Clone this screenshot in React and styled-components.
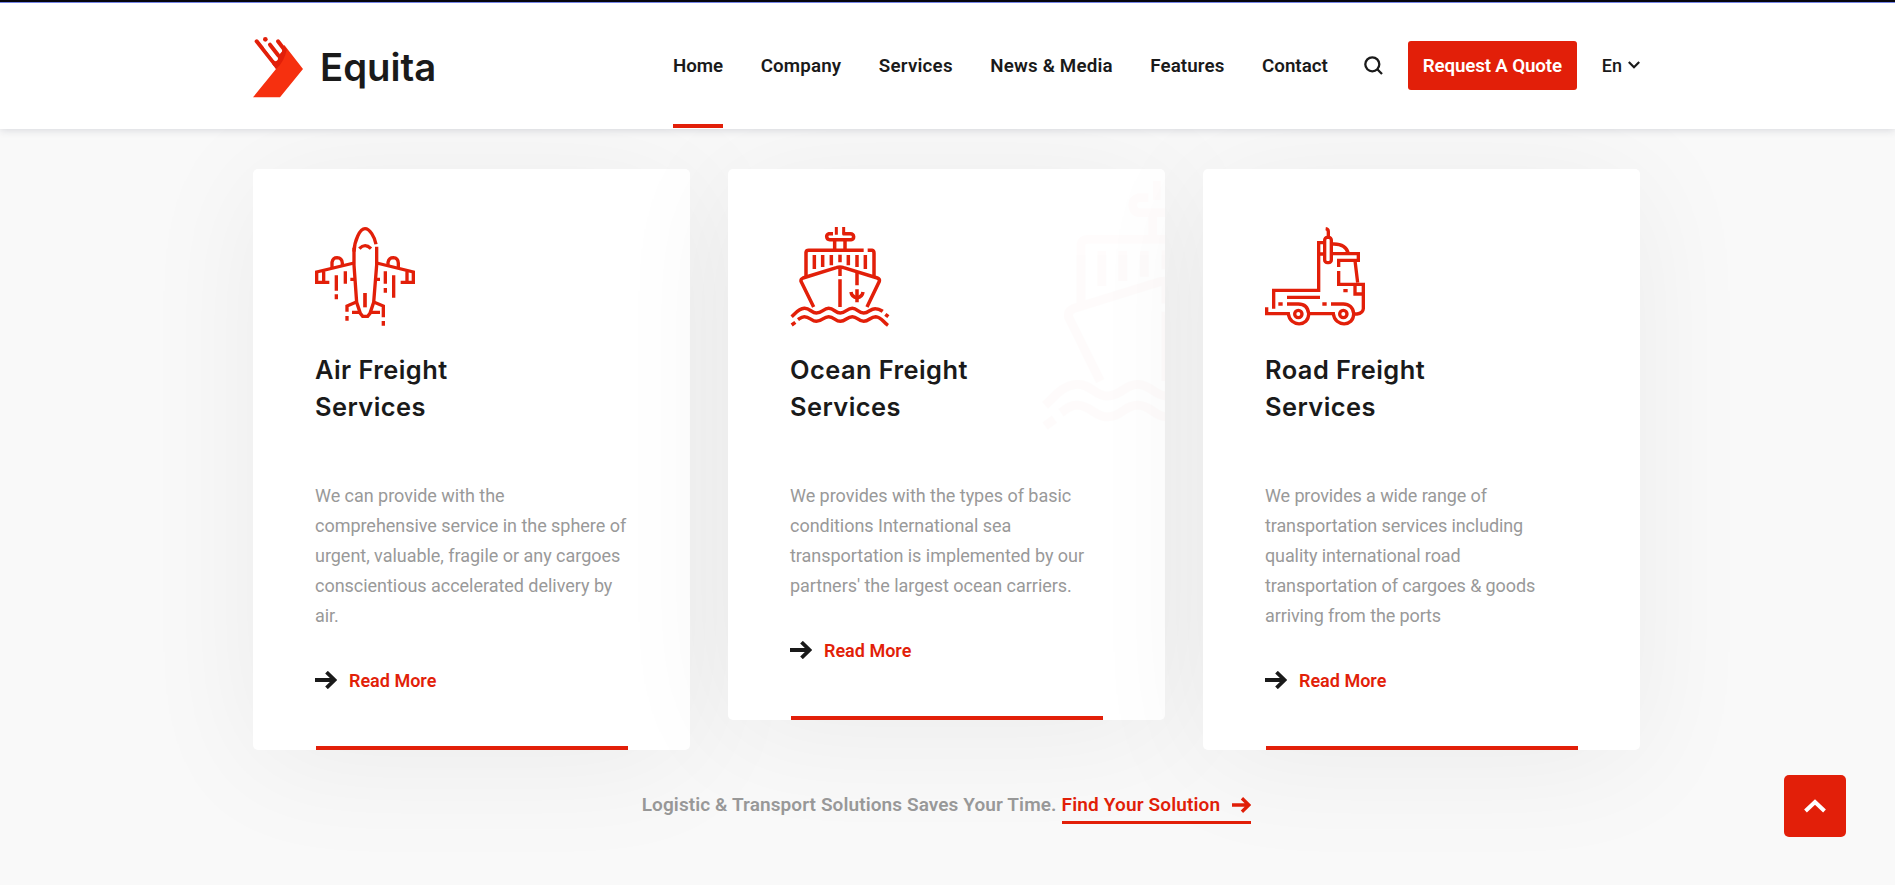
import React from 'react';
import styled, { createGlobalStyle } from 'styled-components';

const RED = '#e21f09';
const INK = '#1a1a1a';
const GREY = '#999999';

const GlobalStyle = createGlobalStyle`
  *, *::before, *::after { box-sizing: border-box; }
  html, body { margin: 0; padding: 0; }
  body {
    height: 885px;
    overflow: hidden;
    background: #f9f9f9;
    color: ${INK};
    font-family: Roboto, "Liberation Sans", sans-serif;
    font-size: 18px;
  }
  a { color: inherit; text-decoration: none; }
  svg { display: block; }
`;

const Page = styled.div`
  height: 885px;
  overflow: hidden;
  background: #f9f9f9;
`;

const Container = styled.div`
  width: 1387px;
  margin: 0 auto;
  transform: translateX(-1px);
`;

const Header = styled.header`
  position: relative;
  z-index: 2;
  height: 129px;
  background: #fff;
  border-top: 2px solid #05050c;
  box-shadow: inset 0 1px 0 #7585e8, 0 1px 8px rgba(40, 45, 80, 0.17);
`;

const HeaderRow = styled(Container)`
  display: flex;
  align-items: flex-start;
  height: 126px;
`;

const Logo = styled.a`
  display: flex;
  width: 420px;
  padding-top: 35px;
`;

const LogoName = styled.span`
  margin: 7px 0 0 17px;
  font: 600 38.3px/46px Inter, "Liberation Sans", sans-serif;
`;

const Nav = styled.nav`
  display: flex;
  justify-content: space-between;
  width: 655px;
  height: 126px;
`;

const NavLink = styled.a`
  height: 126px;
  padding-top: 52px;
  font-weight: 600;
  font-size: 18.75px;
  line-height: 24px;
  letter-spacing: ${(p) => p.$spacing || 0}px;
  white-space: nowrap;
  border-bottom: 4px solid ${(p) => (p.$active ? RED : 'transparent')};
`;

const SearchButton = styled.a`
  margin: 54px 0 0 36px;
`;

const QuoteButton = styled.a`
  width: 169px;
  height: 49px;
  margin: 39px 0 0 25px;
  border-radius: 3px;
  background: ${RED};
  color: #fff;
  font-weight: 600;
  font-size: 18.75px;
  line-height: 50px;
  letter-spacing: -0.15px;
  text-align: center;
  white-space: nowrap;
`;

const Language = styled.a`
  display: flex;
  align-items: center;
  gap: 6px;
  height: 24px;
  margin: 51px 0 0 25px;
  font-size: 18px;
  font-weight: 500;
`;

const Cards = styled.section`
  display: flex;
  align-items: flex-start;
  gap: 38px;
  padding-top: 40px;
  height: 621px;
`;

const Card = styled.article`
  position: relative;
  width: 437px;
  padding: 58px 62px 0;
  border-radius: 5px;
  background: #fff;
  box-shadow: 0 12px 125px rgba(0, 0, 0, 0.06);
`;

const GhostClip = styled.div`
  position: absolute;
  inset: 0;
  overflow: hidden;
  border-radius: 5px;
`;

const Ghost = styled.div`
  position: absolute;
  left: 313px;
  top: 12px;
  opacity: 0.01;
`;

const Title = styled.h3`
  margin: 24px 0 56px;
  font: 600 25.4px/37px Inter, "Liberation Sans", sans-serif;
  letter-spacing: 0.45px;
`;

const Copy = styled.p`
  margin: 0 -10px 34px 0;
  color: ${GREY};
  line-height: 30px;
  letter-spacing: ${(p) => p.$spacing || -0.03}px;
`;

const ReadMore = styled.a`
  display: flex;
  align-items: center;
  gap: 12px;
  height: 30px;
  margin-bottom: 51px;
  color: ${RED};
  font-weight: 600;
`;

const CardLine = styled.div`
  height: 4px;
  margin-left: 1px;
  background: ${RED};
`;

const Footnote = styled.p`
  display: flex;
  justify-content: center;
  margin: 40px 0 0;
  color: ${GREY};
  font-weight: 600;
  font-size: 19px;
  line-height: 30px;
  letter-spacing: 0.1px;
  white-space: pre;
`;

const SolutionLink = styled.a`
  display: flex;
  gap: 12px;
  height: 34px;
  margin-left: 5px;
  color: ${RED};
  letter-spacing: 0.15px;
  border-bottom: 3px solid ${RED};

  svg { margin-top: 7px; }
`;

const TopButton = styled.a`
  position: fixed;
  left: 1784px;
  top: 775px;
  display: grid;
  place-items: center;
  width: 62px;
  height: 62px;
  border-radius: 5px;
  background: ${RED};
`;

function LogoMark() {
  return (
    <svg width="50" height="62" viewBox="39 112 150 186">
      <path d="M39 293 L108 208 L133 136 L189 208 L120 293 Z" fill="#f6300f" />
      <path d="M134 142 L140 150 Q134 184 108 209 L96 192 L122 160 Z" fill={RED} />
      <path d="M50 125 L104 193" stroke={RED} strokeWidth="12" strokeLinecap="round" />
      <path d="M79 141 L107 177" stroke="#fff" strokeWidth="14" strokeLinecap="round" />
      <path d="M102 130 L120 153" stroke="#fff" strokeWidth="12" strokeLinecap="round" />
      <path d="M90 135 L114 166" stroke={RED} strokeWidth="12" strokeLinecap="round" />
      <path d="M114 125 L134 151" stroke={RED} strokeWidth="12" strokeLinecap="round" />
      <circle cx="76" cy="119" r="7" fill={RED} />
    </svg>
  );
}

function PlaneIcon() {
  return (
    <svg width="100" height="100" viewBox="45 36 300 300" fill="none" stroke={RED} strokeWidth="10">
      <path d="M162 110 C163 76 180 41 195 41 C209 41 224 65 228 88" />
      <path d="M162 98 V150 L170 262 L181 295 L188 304 H203 L210 295 L221 262 L230 150 V95" />
      <path d="M178 101 Q195 83 213 101" />
      <path d="M162 144 L50 171 V202 H88 M71 168 V202 M230 144 L340 171 V202 H302 M321 168 V202" />
      <path d="M96 158 V142 Q99 128 111 128 Q126 129 127 144 V150 M264 152 V142 Q267 128 280 128 Q294 129 295 144 V158" />
      <path d="M109 181 V227 M109 238 V253 M136 169 V206 M256 169 V206 M256 219 V233 M281 181 V248 M151 193 H165 M227 193 H240" />
      <path d="M195 234 V277" strokeWidth="11" />
      <path d="M169 261 L141 273 V290 M141 303 V317 M221 261 L250 273 V307 M250 318 V332 M156 292 H182 M209 292 H240" />
    </svg>
  );
}

function ShipIcon({ size = 100 }) {
  return (
    <svg width={size} height={size} viewBox="45 36 300 300" fill="none" stroke={RED} strokeWidth="10.5">
      <path d="M184 36 V59 M206 36 V59" strokeWidth="9" />
      <path d="M174 56 H162 Q155 58 155 65 Q156 74 164 74 H228 Q236 73 236 65 Q235 56 226 56 H203 M179 76 V105 M210 76 V105" />
      <path d="M93 184 V112 Q94 106 101 106 H266 M278 106 H291 Q297 107 297 114 V184" />
      <path d="M116 276 L78 199 Q77 192 84 189 L184 158 Q195 154 206 158 L307 189 Q315 192 313 199 L276 276" />
      <path d="M118 120 V162 M143 120 V156 M169 120 V151 M195 119 V142 M220 120 V151 M246 120 V156 M271 120 V162" />
      <path d="M195 160 V183 M195 193 V276 M246 172 V211 M246 223 V262" />
      <path d="M228 231 Q230 246 246 248 Q262 246 264 231" />
      <path d="M50 305 C62 294 71 281 88 280 C104 279 110 294 124 294 C142 294 145 280 161 280 C177 280 181 294 196 294 C212 294 216 280 232 280 C247 280 250 294 266 294 C282 294 286 280 302 281 C312 281 317 285 323 289 M331 298 L340 305" />
      <path d="M50 330 L61 322 M69 314 C76 309 80 305 88 305 C104 305 110 319 124 319 C142 319 145 305 161 305 C177 305 181 319 196 319 C212 319 216 305 232 305 C247 305 250 319 266 319 C282 319 286 305 302 305 C319 306 324 321 339 331" />
    </svg>
  );
}

function TruckIcon() {
  return (
    <svg width="100" height="100" viewBox="45 36 300 300" fill="none" stroke={RED} strokeWidth="10">
      <path d="M227 41 Q235 42 235 50 V66 M219 83 H206 V226 H71 V281" />
      <rect x="224" y="67" width="20" height="76" rx="8" />
      <path d="M248 87 C275 86 290 96 295 115 M207 117 H220 M247 116 H325 V136 H266 V156 M266 168 V208 H340 V281 Q339 295 321 297 H309" />
      <path d="M315 137 L323 203 M315 208 V237 H338 M280 227 H293" />
      <path d="M111 247 H210" />
      <path d="M85 267 H98 M217 267 H230" />
      <path d="M50 277 V296 H115 C119 337 177 336 176 296 H250 C254 337 312 336 311 296 C310 278 297 267 280 267 H243 M176 296 C174 278 164 267 145 267 H111" />
      <circle cx="145" cy="297" r="11" />
      <circle cx="280" cy="297" r="11" />
    </svg>
  );
}

function Arrow({ width = 22, height = 18, color = INK }) {
  return (
    <svg width={width} height={height} viewBox="0 0 22 18" fill="none" stroke={color} strokeWidth="3.8">
      <path d="M0 9 H19.5 M11.5 1.2 L19.5 9 L11.5 16.8" />
    </svg>
  );
}

const links = [
  { label: 'Home', active: true },
  { label: 'Company', spacing: 0.15 },
  { label: 'Services', spacing: 0.22 },
  { label: 'News & Media', spacing: 0.18 },
  { label: 'Features', spacing: 0.12 },
  { label: 'Contact' },
];

const services = [
  {
    icon: <PlaneIcon />,
    title: ['Air Freight', 'Services'],
    copy: ['We can provide with the', 'comprehensive service in the sphere of', 'urgent, valuable, fragile or any cargoes', 'conscientious accelerated delivery by', 'air.'],
  },
  {
    icon: <ShipIcon />,
    ghost: true,
    title: ['Ocean Freight', 'Services'],
    copy: ['We provides with the types of basic', 'conditions International sea', 'transportation is implemented by our', "partners' the largest ocean carriers."],
  },
  {
    icon: <TruckIcon />,
    title: ['Road Freight', 'Services'],
    spacing: -0.11,
    copy: ['We provides a wide range of', 'transportation services including', 'quality international road', 'transportation of cargoes & goods', 'arriving from the ports'],
  },
];

function Lines({ items }) {
  return items.map((line, i) => (
    <React.Fragment key={line}>
      {i > 0 && <br />}
      {line}
    </React.Fragment>
  ));
}

export default function App() {
  return (
    <Page>
      <GlobalStyle />
      <Header>
        <HeaderRow>
          <Logo href="#">
            <LogoMark />
            <LogoName>Equita</LogoName>
          </Logo>
          <Nav>
            {links.map((l) => (
              <NavLink key={l.label} href="#" $active={l.active} $spacing={l.spacing}>{l.label}</NavLink>
            ))}
          </Nav>
          <SearchButton href="#" aria-label="Search">
            <svg width="19" height="19" viewBox="0 0 19 19" fill="none" stroke={INK} strokeWidth="2.3">
              <circle cx="8.3" cy="8.3" r="7" />
              <path d="M13.3 13.3 L18 18" />
            </svg>
          </SearchButton>
          <QuoteButton href="#">Request A Quote</QuoteButton>
          <Language href="#">
            En
            <svg width="12" height="8" viewBox="0 0 12 8" fill="none" stroke={INK} strokeWidth="2.2">
              <path d="M0.8 1 L6 6.2 L11.2 1" />
            </svg>
          </Language>
        </HeaderRow>
      </Header>
      <Container>
        <Cards>
          {services.map((s) => (
            <Card key={s.title[0]}>
              {s.ghost && <GhostClip><Ghost><ShipIcon size={250} /></Ghost></GhostClip>}
              {s.icon}
              <Title><Lines items={s.title} /></Title>
              <Copy $spacing={s.spacing}><Lines items={s.copy} /></Copy>
              <ReadMore href="#"><Arrow />Read More</ReadMore>
              <CardLine />
            </Card>
          ))}
        </Cards>
        <Footnote>
          Logistic &amp; Transport Solutions Saves Your Time.
          <SolutionLink href="#">Find Your Solution<Arrow width={19} height={16} color={RED} /></SolutionLink>
        </Footnote>
      </Container>
      <TopButton href="#" aria-label="Back to top">
        <svg width="22" height="14" viewBox="0 0 22 14" fill="none" stroke="#fff" strokeWidth="4">
          <path d="M1.5 12 L11 3 L20.5 12" />
        </svg>
      </TopButton>
    </Page>
  );
}
